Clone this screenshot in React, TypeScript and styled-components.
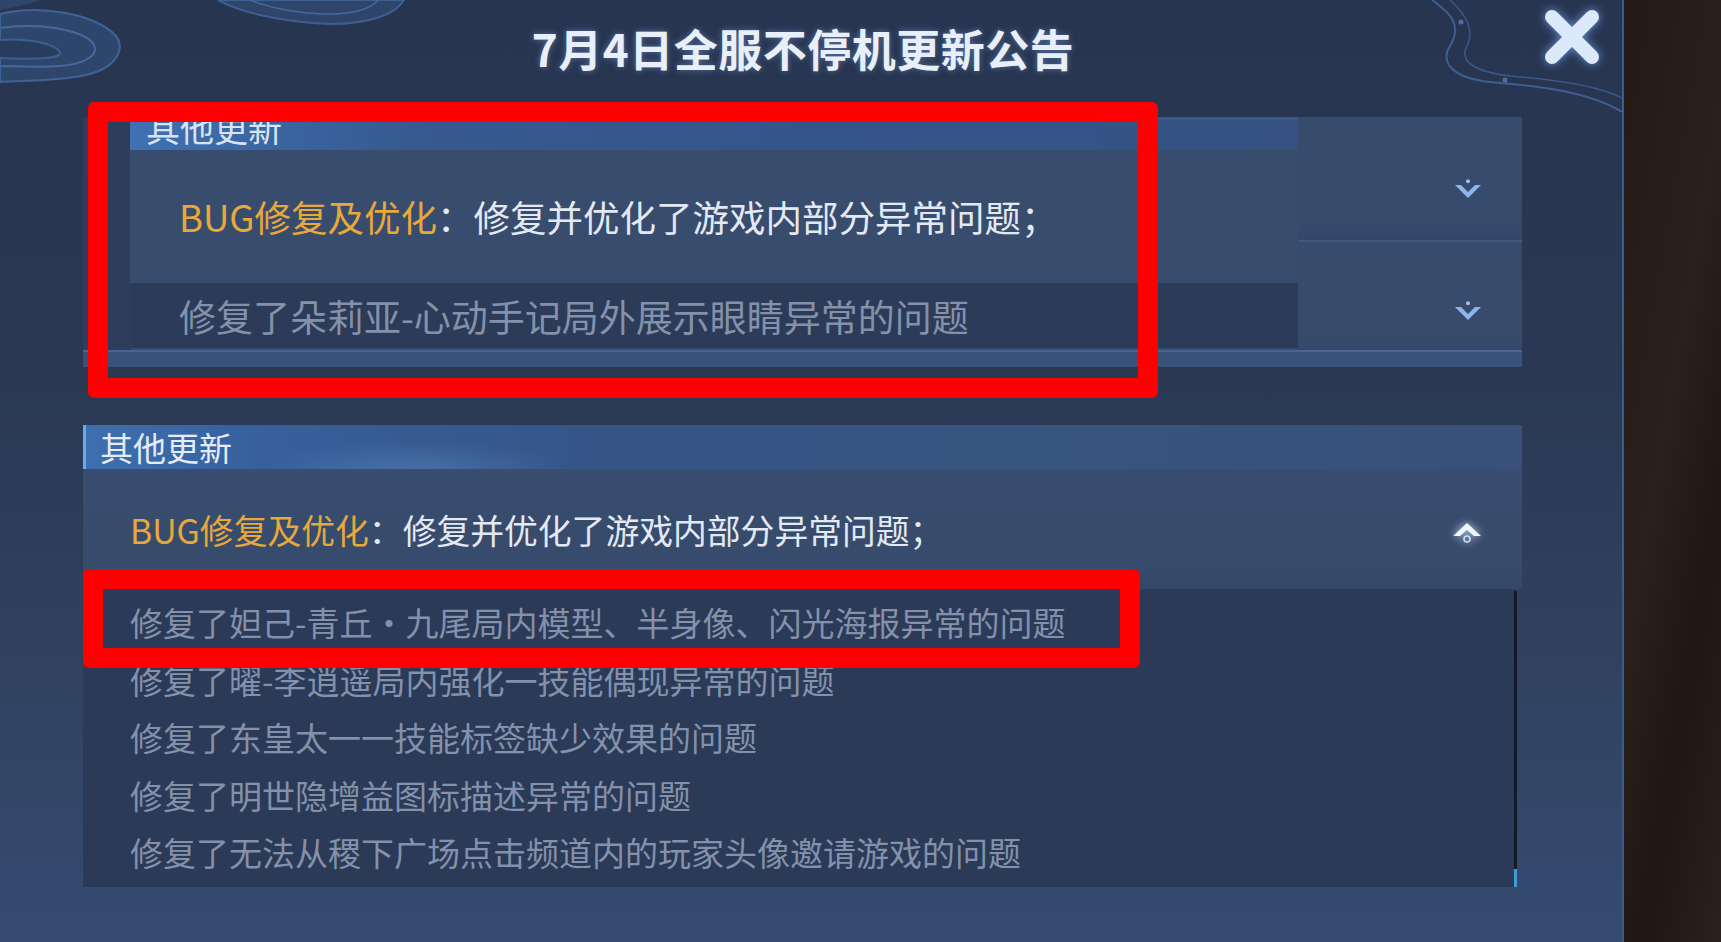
import React from 'react'
import styled, { createGlobalStyle } from 'styled-components'

const GlobalStyle = createGlobalStyle`
  html, body {
    margin: 0;
    padding: 0;
    background: #231a17;
  }
  body {
    font-family: "Noto Sans CJK SC", "Noto Sans", "Liberation Sans", sans-serif;
  }
  * {
    box-sizing: border-box;
  }
`

const fixList = [
  '修复了妲己-青丘·九尾局内模型、半身像、闪光海报异常的问题',
  '修复了曜-李逍遥局内强化一技能偶现异常的问题',
  '修复了东皇太一一技能标签缺少效果的问题',
  '修复了明世隐增益图标描述异常的问题',
  '修复了无法从稷下广场点击频道内的玩家头像邀请游戏的问题',
]

const ChevronDown = () => (
  <svg width="28" height="20" viewBox="0 0 28 20">
    <circle cx="14" cy="2.2" r="2" fill="#9cc0f2" />
    <path d="M1 6 L7 6 L14 13 L21 6 L27 6 L14 19 Z" fill="#8fb5ee" />
  </svg>
)

const ChevronUp = () => (
  <svg width="30" height="26" viewBox="0 0 30 26">
    <path d="M1 15 L15 2 L29 15 L22 15 L15 9 L8 15 Z" fill="#eef5ff" />
    <circle cx="15" cy="18" r="3" fill="none" stroke="#c9dcf5" strokeWidth="1.6" />
  </svg>
)

const CloseIcon = () => (
  <svg width="60" height="60" viewBox="0 0 60 60">
    <path d="M10 10 L50 50 M50 10 L10 50" stroke="#dce9fb" strokeWidth="14" strokeLinecap="round" />
  </svg>
)

const Swirls = () => (
  <DecoSvg width="1622" height="130" viewBox="0 0 1622 130">
    <path d="M0 14 C40 4 90 14 112 32 C128 46 118 66 90 74 C60 82 20 80 0 82 Z" fill="#2f466c" stroke="#3f6396" strokeWidth="2" />
    <path d="M0 28 C40 22 80 30 92 42 C102 54 86 64 60 66 C35 68 14 66 0 66" fill="none" stroke="#46699c" strokeWidth="2" />
    <path d="M0 40 C30 38 55 44 60 52 C62 58 40 60 0 58" fill="#283c5e" stroke="#3d5f90" strokeWidth="2" />
    <path d="M0 0 L40 0 C30 4 10 8 0 10 Z" fill="#2f466c" />
    <path d="M218 0 C240 12 280 22 330 24 C370 24 396 14 404 0 Z" fill="#2e4469" stroke="#3d5f92" strokeWidth="2" />
    <path d="M250 0 C270 8 300 14 330 14 C355 14 372 8 378 0" fill="none" stroke="#46699c" strokeWidth="1.5" />
    <path d="M1432 0 C1452 14 1462 26 1450 46 C1440 62 1452 78 1490 82 C1540 86 1590 92 1622 112" fill="none" stroke="#3e5f90" strokeWidth="2" />
    <path d="M1450 0 C1470 18 1474 34 1466 48 C1460 62 1476 72 1510 76 C1560 80 1600 86 1622 98" fill="none" stroke="#3a5888" strokeWidth="1.5" />
    <circle cx="1461" cy="22" r="2.5" fill="#4a6fa4" />
    <circle cx="1505" cy="80" r="2.5" fill="#4a6fa4" />
  </DecoSvg>
)

const App: React.FC = () => {
  return (
    <>
      <GlobalStyle />
      <Screen>
        <Panel>
          <Swirls />
          <Header>
            <span />
            <Title>7月4日全服不停机更新公告</Title>
            <CloseButton aria-label="关闭">
              <CloseIcon />
            </CloseButton>
          </Header>

          <ScrolledSection>
            <ScrolledBody>
              <Gutter />
              <InnerColumn>
                <ClippedHeader>
                  <HeaderLabel>其他更新</HeaderLabel>
                </ClippedHeader>
                <SummaryRow>
                  <Highlight>BUG修复及优化</Highlight>：修复并优化了游戏内部分异常问题；
                </SummaryRow>
                <FadedRow>修复了朵莉亚-心动手记局外展示眼睛异常的问题</FadedRow>
                <InnerFill />
              </InnerColumn>
              <ToggleColumn>
                <ToggleCell $height={123} $shift={20}>
                  <ChevronDown />
                </ToggleCell>
                <ToggleCell $height={110} $shift={30} $divider>
                  <ChevronDown />
                </ToggleCell>
              </ToggleColumn>
            </ScrolledBody>
            <BottomStrip />
          </ScrolledSection>

          <Section>
            <SectionHeader>
              <HeaderText>其他更新</HeaderText>
            </SectionHeader>
            <ExpandedRow>
              <SummaryText>
                <Highlight>BUG修复及优化</Highlight>：修复并优化了游戏内部分异常问题；
              </SummaryText>
              <ToggleSlot>
                <ChevronUp />
              </ToggleSlot>
            </ExpandedRow>
            <ListArea>
              <ItemList>
                {fixList.map((item) => (
                  <Item key={item}>{item}</Item>
                ))}
              </ItemList>
              <ScrollTrack>
                <ScrollThumb />
              </ScrollTrack>
            </ListArea>
          </Section>

          <Annotation $left={88} $top={102} $width={1070} $height={296} />
          <Annotation $left={83} $top={569} $width={1057} $height={99} />
        </Panel>
        <Side />
      </Screen>
    </>
  )
}

const Screen = styled.div`
  display: flex;
  width: 1721px;
  height: 942px;
  overflow: hidden;
`

const Panel = styled.div`
  position: relative;
  width: 1624px;
  height: 942px;
  display: flex;
  flex-direction: column;
  background: linear-gradient(180deg, #283550 0%, #2a3853 40%, #30425f 70%, #354b72 100%);
  border-right: 2px solid #3c5c8c;
`

const DecoSvg = styled.svg`
  position: absolute;
  left: 0;
  top: 0;
  pointer-events: none;
`

const Header = styled.div`
  position: relative;
  display: grid;
  grid-template-columns: 1fr auto 1fr;
  align-items: start;
  height: 117px;
`

const Title = styled.h1`
  margin: 20px 16px 0 0;
  font-size: 44px;
  line-height: 56px;
  font-weight: 700;
  color: #e9eff8;
  letter-spacing: 0.5px;
  text-shadow: 0 0 6px rgba(140, 185, 255, 0.45);
  white-space: nowrap;
`

const CloseButton = styled.button`
  justify-self: end;
  margin: 7px 20px 0 0;
  padding: 0;
  border: none;
  background: none;
  line-height: 0;
  cursor: pointer;
  filter: drop-shadow(0 0 5px rgba(120, 175, 255, 0.8));
`

const ScrolledSection = styled.div`
  position: relative;
  margin: 0 100px 0 83px;
  height: 250px;
  display: flex;
  flex-direction: column;
  background: #2d3c5a;
  overflow: hidden;
`

const ScrolledBody = styled.div`
  display: flex;
  height: 233px;
`

const Gutter = styled.div`
  width: 47px;
  background: #2e3d5b;
`

const InnerColumn = styled.div`
  width: 1168px;
  display: flex;
  flex-direction: column;
`

const ClippedHeader = styled.div`
  height: 33px;
  display: flex;
  align-items: flex-end;
  overflow: hidden;
  background: linear-gradient(90deg, #3f71b4 0%, #36598f 25%, #34558a 60%, #355283 100%);
  border-top: 3px solid #3a5888;
`

const HeaderLabel = styled.span`
  padding: 0 0 0 16px;
  margin-bottom: 5px;
  font-size: 34px;
  line-height: 34px;
  color: #d9e4f3;
`

const Highlight = styled.span`
  color: #e8a83a;
`

const SummaryRow = styled.div`
  height: 133px;
  display: flex;
  align-items: center;
  padding-left: 49px;
  font-size: 36.5px;
  color: #e3e9f3;
  white-space: nowrap;
  background: #384c6e;
`

const FadedRow = styled.div`
  height: 65px;
  display: flex;
  align-items: center;
  padding-left: 49px;
  font-size: 37px;
  color: #8391ab;
  white-space: nowrap;
  background: #2c3b58;
`

const InnerFill = styled.div`
  flex: 1;
  background: #374b6c;
`

const ToggleColumn = styled.div`
  flex: 1;
  display: flex;
  flex-direction: column;
`

const ToggleCell = styled.div<{ $height: number; $shift: number; $divider?: boolean }>`
  height: ${(p) => p.$height}px;
  display: flex;
  align-items: center;
  justify-content: flex-end;
  padding: ${(p) => p.$shift}px 40px 0 0;
  background: linear-gradient(180deg, #374c6d 0%, #374c6d 85%, #33476a 100%);
  border-top: ${(p) => (p.$divider ? '2px solid #41587c' : 'none')};
`

const BottomStrip = styled.div`
  flex: 1;
  background: #3a517a;
  border-top: 2px solid #4a6591;
`

const Section = styled.div`
  margin: 58px 100px 0 83px;
  display: flex;
  flex-direction: column;
`

const SectionHeader = styled.div`
  position: relative;
  height: 44px;
  display: flex;
  align-items: center;
  background:
    radial-gradient(ellipse 220px 40px at 330px 44px, rgba(150, 200, 255, 0.18), transparent 70%),
    linear-gradient(90deg, #3e6fb0 0%, #37609c 12%, #355588 35%, #37557f 70%, #38507a 100%);
  border-left: 3px solid #5eaef0;
`

const HeaderText = styled.span`
  padding-left: 14px;
  font-size: 33px;
  line-height: 40px;
  color: #e4ecf7;
`

const ExpandedRow = styled.div`
  height: 120px;
  display: flex;
  align-items: center;
  justify-content: space-between;
  padding: 0 40px 0 47px;
  background: linear-gradient(180deg, #384d6f 0%, #374b6c 80%, #33476a 100%);
`

const SummaryText = styled.div`
  font-size: 33.8px;
  color: #e3e9f3;
  white-space: nowrap;
`

const ToggleSlot = styled.div`
  margin-top: 10px;
  line-height: 0;
  filter: drop-shadow(0 0 4px rgba(220, 235, 255, 0.9));
`

const ListArea = styled.div`
  display: flex;
  height: 298px;
  margin-right: 5px;
  background: #2b3a57;
`

const ItemList = styled.ul`
  flex: 1;
  margin: 0;
  padding: 5px 0 0 47px;
  list-style: none;
`

const Item = styled.li`
  height: 57.5px;
  line-height: 57.5px;
  font-size: 33px;
  color: #8391ab;
  white-space: nowrap;
`

const ScrollTrack = styled.div`
  width: 3px;
  margin-top: 2px;
  display: flex;
  flex-direction: column;
  justify-content: flex-end;
  background: #121a28;
`

const ScrollThumb = styled.div`
  height: 18px;
  background: #3f9ad8;
`

const Annotation = styled.div<{ $left: number; $top: number; $width: number; $height: number }>`
  position: absolute;
  left: ${(p) => p.$left}px;
  top: ${(p) => p.$top}px;
  width: ${(p) => p.$width}px;
  height: ${(p) => p.$height}px;
  border: 20px solid #ff0000;
  border-radius: 6px;
  pointer-events: none;
`

const Side = styled.div`
  flex: 1;
  background: linear-gradient(100deg, #231a17 0%, #2a201c 45%, #1f1714 70%, #2b211d 100%);
`

export default App
